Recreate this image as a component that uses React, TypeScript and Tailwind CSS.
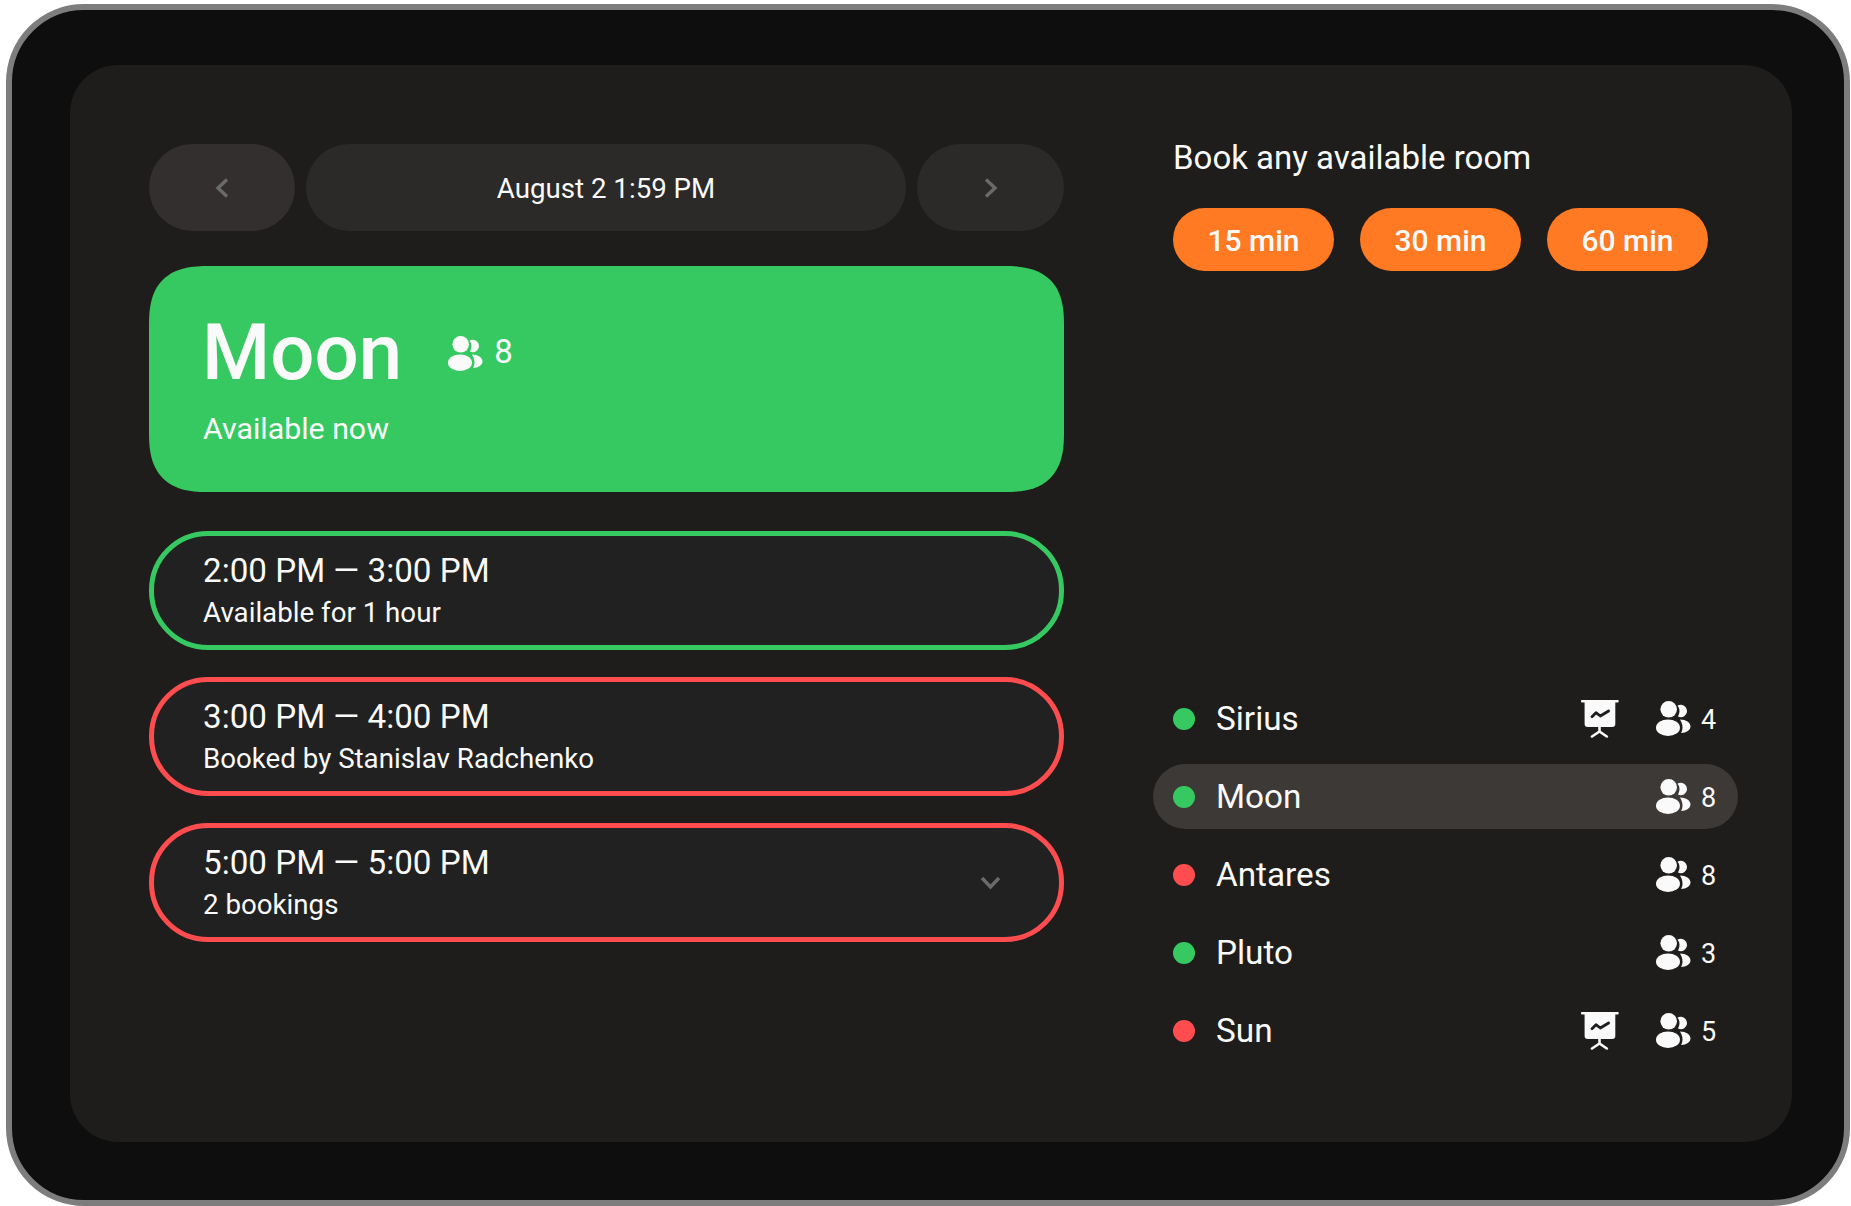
const ROOMS = [
  { name: 'Sirius', free: true, seats: 4, screen: true },
  { name: 'Moon', free: true, seats: 8, screen: false, active: true },
  { name: 'Antares', free: false, seats: 8, screen: false },
  { name: 'Pluto', free: true, seats: 3, screen: false },
  { name: 'Sun', free: false, seats: 5, screen: true },
];

const SLOTS = [
  { time: '2:00 PM — 3:00 PM', note: 'Available for 1 hour', free: true },
  { time: '3:00 PM — 4:00 PM', note: 'Booked by Stanislav Radchenko', free: false },
  { time: '5:00 PM — 5:00 PM', note: '2 bookings', free: false, more: true },
];

function PeopleIcon() {
  return (
    <svg width="35" height="35" viewBox="0 0 35 35" className="shrink-0" fill="#fafafa">
      <circle cx="12.7" cy="8.3" r="8.3" />
      <ellipse cx="12" cy="26.7" rx="12" ry="8.3" />
      <path d="M21.5 4.7A6.2 6.2 0 1 1 22 15.5C23 13.5 23.5 11.5 23.5 10C23.5 8 23 6.5 21.5 4.7Z" />
      <path d="M24 18.5C30 18.5 34.5 21.5 34.5 25.5C34.5 29 30.5 31.8 25 32C26 30.5 26.5 28.5 26.5 26.5C26.5 23.5 25.5 21 24 18.5Z" />
    </svg>
  );
}

function ScreenIcon() {
  return (
    <svg width="38" height="38" viewBox="0 0 38 38" className="shrink-0">
      <rect x="0" y="0" width="37.6" height="2.4" rx="0.6" fill="#fafafa" />
      <path d="M3.6 2H34.3V24C34.3 26 33.3 27 31.3 27H6.6C4.6 27 3.6 26 3.6 24Z" fill="#fafafa" />
      <path d="M11 16.7L15 12.7L19.3 16L27.6 11" fill="none" stroke="#1e1d1b" strokeWidth="2.8" strokeLinecap="round" strokeLinejoin="round" />
      <path d="M18.5 27V31.5M18.5 31.5L11 36.5M18.5 31.5L25.8 36.5" fill="none" stroke="#fafafa" strokeWidth="2.6" strokeLinecap="round" />
    </svg>
  );
}

function Chevron({ dir }: { dir: 'left' | 'right' | 'down' }) {
  const points = { left: '12,1.5 3,10 12,18.5', right: '2,1.5 11,10 2,18.5', down: '2,2 10.5,11 19,2' }[dir];
  const down = dir === 'down';
  return (
    <svg width={down ? 21 : 14} height={down ? 14 : 20} viewBox={down ? '0 0 21 14' : '0 0 14 20'}>
      <polyline points={points} fill="none" stroke="#6a6a6a" strokeWidth="3.4" />
    </svg>
  );
}

export default function App() {
  return (
    <div className="h-[1206px] w-[1851px] bg-white pl-[6px] pt-[4px] font-['Roboto',sans-serif] text-[#fafafa]">
      <div className="h-[1202px] w-[1844px] rounded-[78px] border-[6px] border-[#7d7d7d] bg-[#0e0e0e] pl-[58px] pt-[55px]">
        <div className="flex h-[1077px] w-[1722px] gap-[109px] rounded-[48px] bg-[#1e1d1b] pl-[79px] pt-[79px]">
          {/* schedule */}
          <div className="w-[915px] shrink-0">
            <div className="flex h-[87px] gap-[11px]">
              <button className="flex w-[146px] items-center justify-center rounded-[44px] bg-[#332f2e]">
                <Chevron dir="left" />
              </button>
              <div className="flex flex-1 items-center justify-center rounded-[44px] bg-[#2b2a28] pt-[2px] text-[27.7px] font-[450]">
                August 2 1:59 PM
              </div>
              <button className="flex w-[147px] items-center justify-center rounded-[44px] bg-[#2b2a28]">
                <Chevron dir="right" />
              </button>
            </div>

            <div className="mt-[35px] h-[226px] rounded-[60px] bg-[#37c961] pl-[53px] pt-[42px] [corner-shape:superellipse(1.4)]">
              <div className="flex h-[90px] items-center">
                <span className="text-[78px] leading-[90px] font-medium">Moon</span>
                <span className="ml-[46px] flex items-center gap-[11px]">
                  <PeopleIcon />
                  <span className="-mt-[2px] text-[33px]">8</span>
                </span>
              </div>
              <div className="ml-[1px] mt-[13px] text-[30.3px] leading-[36px] font-[450]">Available now</div>
            </div>

            <div className="mt-[39px] flex flex-col gap-[27px]">
              {SLOTS.map(s => (
                <div
                  key={s.time}
                  className={`flex h-[119px] items-center justify-between rounded-[59px] border-[5px] bg-[#212121] pl-[49px] pr-[58px] ${
                    s.free ? 'border-[#37c961]' : 'border-[#ff4d4f]'
                  }`}
                >
                  <div>
                    <div className="-mt-[1px] text-[33.2px] leading-[38px] font-[450]">{s.time}</div>
                    <div className="mt-[7px] text-[27.7px] leading-[32px] font-[450]">{s.note}</div>
                  </div>
                  {s.more && <Chevron dir="down" />}
                </div>
              ))}
            </div>
          </div>

          {/* rooms */}
          <div className="w-[565px] shrink-0">
            <h2 className="pt-[1px] text-[33px] leading-[26px] font-[450]">Book any available room</h2>
            <div className="mt-[37px] flex gap-[26px]">
              {[15, 30, 60].map(m => (
                <button key={m} className="h-[63px] w-[161px] rounded-[32px] bg-[#ff7a22] pt-[2px] text-[30px] font-medium">
                  {m} min
                </button>
              ))}
            </div>

            <div className="-ml-[20px] mt-[415px] flex w-[585px] flex-col gap-[13px]">
              {ROOMS.map(r => (
                <div
                  key={r.name}
                  className={`flex h-[65px] items-center rounded-[33px] pl-[20px] pr-[23px] ${r.active ? 'bg-[#3d3937]' : ''}`}
                >
                  <span className={`h-[22px] w-[22px] rounded-full ${r.free ? 'bg-[#37c961]' : 'bg-[#ff4d4f]'}`} />
                  <span className="ml-[21px] flex-1 text-[33.3px] font-[450]">{r.name}</span>
                  {r.screen && (
                    <span className="mr-[37px]">
                      <ScreenIcon />
                    </span>
                  )}
                  <PeopleIcon />
                  <span className="ml-[10px] mt-[4px] w-[14px] text-[27px]">{r.seats}</span>
                </div>
              ))}
            </div>
          </div>
        </div>
      </div>
    </div>
  );
}
